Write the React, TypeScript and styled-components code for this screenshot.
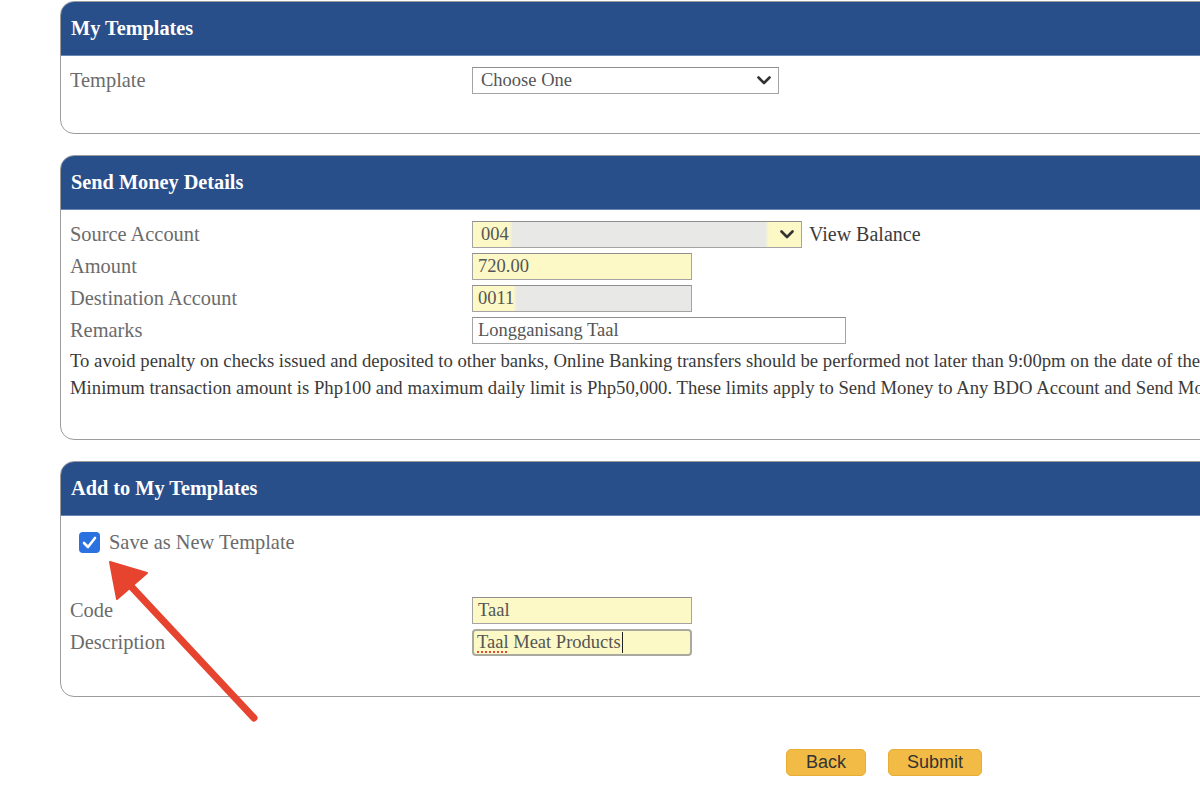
import React from "react";
import styled, { createGlobalStyle } from "styled-components";

const Global = createGlobalStyle`
  html, body { margin: 0; padding: 0; background: #ffffff; }
  body { width: 1200px; height: 800px; overflow: hidden; font-family: "Liberation Serif", "Times New Roman", serif; }
`;

const Page = styled.div`
  position: relative;
  width: 1200px;
  height: 800px;
  overflow: hidden;
  padding: 1px 0 0 60px;
  box-sizing: border-box;
  display: flex;
  flex-direction: column;
  gap: 21px;
`;

const Panel = styled.section`
  width: 1180px;
  border: 1px solid #9c9c9c;
  border-radius: 14px;
  overflow: hidden;
  background: #fff;
  box-sizing: border-box;
  flex-shrink: 0;
`;

const Header = styled.header`
  height: 54px;
  background: #294f8b;
  border-bottom: 1px solid #6a86b3;
  display: flex;
  align-items: center;
  padding-left: 10px;
  color: #fff;
  font-weight: bold;
  font-size: 20.3px;
  box-sizing: border-box;
`;

const Body = styled.div<{ $top: number; $bottom: number }>`
  padding: ${(p) => p.$top}px 0 ${(p) => p.$bottom}px 9px;
  display: flex;
  flex-direction: column;
  gap: 5px;
`;

const Row = styled.div<{ $mt?: number }>`
  display: grid;
  grid-template-columns: 402px auto;
  align-items: center;
  height: 27px;
  margin-top: ${(p) => p.$mt ?? 0}px;
`;

const Label = styled.div`
  font-size: 20.4px;
  color: #6b6b6b;
`;

const FieldWrap = styled.div`
  display: flex;
  align-items: center;
`;

const Field = styled.div<{ $w: number; $bg?: string; $focus?: boolean }>`
  width: ${(p) => p.$w}px;
  height: 27px;
  box-sizing: border-box;
  border: ${(p) => (p.$focus ? "2px solid #a9a9a0" : "1px solid #a4a4a4")};
  border-top-color: ${(p) => (p.$focus ? "#a9a9a0" : "#8f8f8f")};
  border-radius: ${(p) => (p.$focus ? "4px" : "0")};
  background: ${(p) => p.$bg ?? "#fff"};
  display: flex;
  align-items: center;
  padding-left: ${(p) => (p.$focus ? 3 : 5)}px;
  font-size: 18.5px;
  color: #555;
  white-space: nowrap;
  position: relative;
`;

const Select = styled(Field)`
  padding-left: 8px;
  justify-content: space-between;
  padding-right: 7px;
`;

const Chevron = () => (
  <svg width="14" height="9" viewBox="0 0 14 9">
    <path d="M1.5 1.5 L7 7 L12.5 1.5" fill="none" stroke="#333" strokeWidth="2.6" strokeLinecap="round" strokeLinejoin="round" />
  </svg>
);

const LinkText = styled.span`
  margin-left: 7px;
  font-size: 20px;
  color: #3c3c3c;
`;

const Note = styled.div`
  font-size: 18.7px;
  color: #3a3a3a;
  line-height: 27px;
  white-space: nowrap;
`;

const Notes = styled.div`
  margin-top: -2px;
`;

const CheckRow = styled.label`
  display: flex;
  align-items: center;
  gap: 9px;
  margin-left: 9px;
  font-size: 20.4px;
  color: #6b6b6b;
  height: 21px;
`;

const CheckBox = styled.span`
  width: 21px;
  height: 21px;
  border-radius: 4px;
  background: #2b71e0;
  display: flex;
  align-items: center;
  justify-content: center;
`;

const Misspelled = styled.span`
  text-decoration: underline dotted #e04a3a;
  text-decoration-thickness: 2px;
  text-underline-offset: 3px;
`;

const Caret = styled.span`
  display: inline-block;
  width: 1.5px;
  height: 21px;
  background: #222;
  margin-left: 1px;
`;

const ButtonBar = styled.div`
  display: flex;
  gap: 22px;
  padding-left: 726px;
  margin-top: 31px;
`;

const Button = styled.button<{ $w: number }>`
  width: ${(p) => p.$w}px;
  height: 27px;
  border: 1px solid #e7ad35;
  border-radius: 5px;
  background: #f2bb45;
  font-family: "Liberation Sans", Arial, sans-serif;
  font-size: 18px;
  color: #333;
  padding: 0;
`;

const Overlay = styled.svg`
  position: absolute;
  left: 0;
  top: 0;
  pointer-events: none;
`;

const yellow = "#fcf9c6";
const masked = (yw: number, tail: number) =>
  `linear-gradient(to right, ${yellow} 0 ${yw}px, #e8e8e6 ${yw + 4}px calc(100% - ${tail + 4}px), ${tail ? yellow : "#e8e8e6"} calc(100% - ${tail}px))`;

export default function App() {
  return (
    <>
      <Global />
      <Page>
        <Panel>
          <Header>My Templates</Header>
          <Body $top={11} $bottom={39}>
            <Row>
              <Label>Template</Label>
              <FieldWrap>
                <Select $w={307}>
                  Choose One <Chevron />
                </Select>
              </FieldWrap>
            </Row>
          </Body>
        </Panel>

        <Panel>
          <Header>Send Money Details</Header>
          <Body $top={11} $bottom={38}>
            <Row>
              <Label>Source Account</Label>
              <FieldWrap>
                <Select $w={330} $bg={masked(36, 32)}>
                  004 <Chevron />
                </Select>
                <LinkText>View Balance</LinkText>
              </FieldWrap>
            </Row>
            <Row>
              <Label>Amount</Label>
              <FieldWrap>
                <Field $w={220} $bg={yellow}>720.00</Field>
              </FieldWrap>
            </Row>
            <Row>
              <Label>Destination Account</Label>
              <FieldWrap>
                <Field $w={220} $bg={masked(40, 0)}>0011</Field>
              </FieldWrap>
            </Row>
            <Row>
              <Label>Remarks</Label>
              <FieldWrap>
                <Field $w={374}>Longganisang Taal</Field>
              </FieldWrap>
            </Row>
            <Notes>
              <Note>
                To avoid penalty on checks issued and deposited to other banks, Online Banking transfers should be performed not later than 9:00pm on the date of the check.
              </Note>
              <Note>
                Minimum transaction amount is Php100 and maximum daily limit is Php50,000. These limits apply to Send Money to Any BDO Account and Send Money to Other Banks.
              </Note>
            </Notes>
          </Body>
        </Panel>

        <Panel>
          <Header>Add to My Templates</Header>
          <Body $top={16} $bottom={40}>
            <CheckRow>
              <CheckBox>
                <svg width="15" height="13" viewBox="0 0 15 13">
                  <path d="M2 7 L6 11 L13 2" fill="none" stroke="#fff" strokeWidth="2.6" strokeLinecap="round" strokeLinejoin="round" />
                </svg>
              </CheckBox>
              Save as New Template
            </CheckRow>
            <Row $mt={39}>
              <Label>Code</Label>
              <FieldWrap>
                <Field $w={220} $bg={yellow}>Taal</Field>
              </FieldWrap>
            </Row>
            <Row>
              <Label>Description</Label>
              <FieldWrap>
                <Field $w={220} $bg={yellow} $focus>
                  <Misspelled>Taal</Misspelled>&nbsp;Meat Products<Caret />
                </Field>
              </FieldWrap>
            </Row>
          </Body>
        </Panel>

        <ButtonBar>
          <Button $w={80}>Back</Button>
          <Button $w={94}>Submit</Button>
        </ButtonBar>

        <Overlay width="1200" height="800" viewBox="0 0 1200 800">
          <line x1="254" y1="718" x2="127" y2="582" stroke="#e6442f" strokeWidth="7" strokeLinecap="round" />
          <polygon points="110,562 147,573 117,599" fill="#e6442f" stroke="#e6442f" strokeWidth="2" strokeLinejoin="round" />
        </Overlay>
      </Page>
    </>
  );
}
